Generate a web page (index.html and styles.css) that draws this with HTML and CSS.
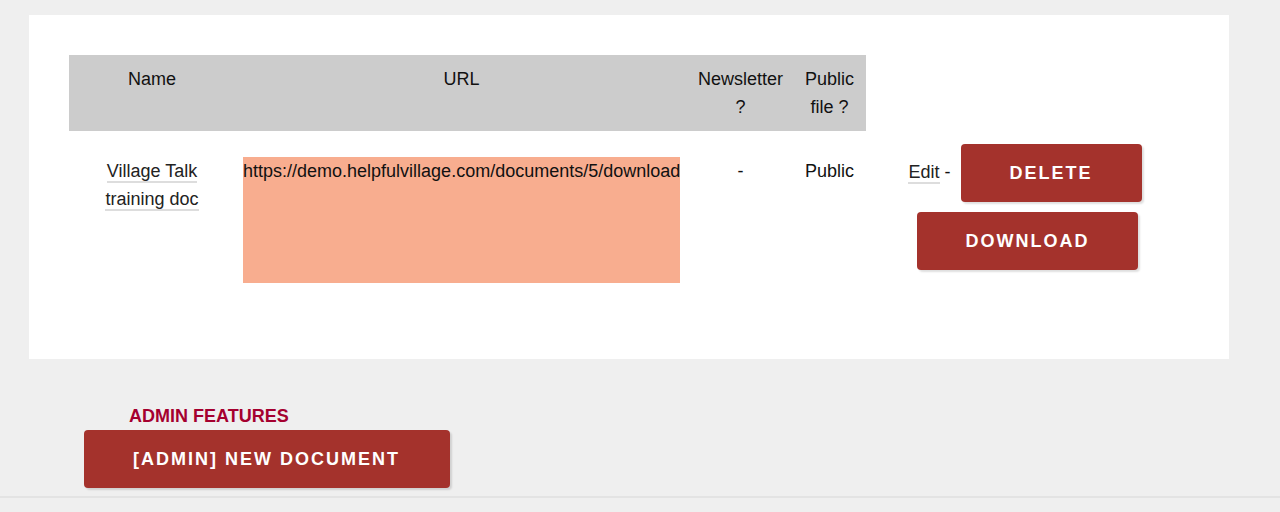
FILE: index.html
```html
<!DOCTYPE html>
<html lang="en">
<head>
<meta charset="utf-8">
<title>Documents</title>
<link rel="stylesheet" href="styles.css">
</head>
<body>
<div class="page">
  <section class="panel">
    <table class="docs">
      <colgroup>
        <col class="c-name">
        <col class="c-url">
        <col class="c-news">
        <col class="c-public">
        <col class="c-actions">
      </colgroup>
      <thead>
        <tr>
          <th>Name</th>
          <th>URL</th>
          <th>Newsletter ?</th>
          <th>Public file ?</th>
          <th class="blank"></th>
        </tr>
      </thead>
      <tbody>
        <tr>
          <td><a class="link" href="#">Village Talk training doc</a></td>
          <td><div class="url">https://demo.helpfulvillage.com/documents/5/download</div></td>
          <td>-</td>
          <td>Public</td>
          <td class="actions"><a class="link" href="#">Edit</a> - <a class="btn" href="#">Delete</a> <a class="btn" href="#">Download</a></td>
        </tr>
      </tbody>
    </table>
  </section>

  <section class="admin">
    <h3 class="admin-title">Admin features</h3>
    <a class="btn" href="#">[Admin] New document</a>
  </section>
</div>
<footer class="footer"></footer>
</body>
</html>
```

FILE: styles.css
```css
html, body {
  margin: 0;
  padding: 0;
  background: #efefef;
}

body {
  font-family: "Liberation Sans", Arial, sans-serif;
  font-size: 18px;
  color: #111;
}

.page {
  padding: 15px 0 0 29px;
}

.panel {
  width: 1200px;
  box-sizing: border-box;
  padding: 40px;
  background: #fff;
}

/* documents table */
.docs {
  width: 100%;
  border-collapse: collapse;
  table-layout: fixed;
}

.c-name { width: 166px; }
.c-url { width: 453px; }
.c-news { width: 105px; }
.c-public { width: 73px; }
.c-actions { width: 323px; }

.docs th {
  background: #cccccc;
  font-weight: normal;
  line-height: 28px;
  padding: 10px 8px;
  text-align: center;
  vertical-align: top;
}

.docs th.blank {
  background: transparent;
}

.docs td {
  line-height: 28px;
  padding: 26px 8px 36px;
  text-align: center;
  vertical-align: top;
}

.docs td.actions {
  padding-top: 8px;
}

.url {
  height: 126px;
  background: #f8ad8f;
  text-align: left;
  white-space: nowrap;
}

.link {
  color: #222;
  text-decoration: none;
  border-bottom: 2px solid #dddddd;
}

/* red action buttons */
.btn {
  display: inline-block;
  vertical-align: middle;
  margin: 5px;
  padding: 20px 49px;
  line-height: 18px;
  font-size: 18px;
  font-weight: bold;
  letter-spacing: 2px;
  text-transform: uppercase;
  text-decoration: none;
  color: #fff;
  background: #a4322c;
  border-radius: 4px;
  box-shadow: 2px 2px 2px rgba(0, 0, 0, 0.13);
}

/* admin area below the panel */
.admin {
  margin: 47px 0 0 55px;
}

.admin-title {
  margin: 0;
  padding-left: 45px;
  line-height: 20px;
  font-size: 18px;
  font-weight: bold;
  text-transform: uppercase;
  color: #a5002f;
}

.admin .btn {
  margin: 4px 0 0;
  padding-right: 50px;
}

.footer {
  margin-top: 8px;
  height: 12px;
  border-top: 2px solid #e3e3e3;
}
```
